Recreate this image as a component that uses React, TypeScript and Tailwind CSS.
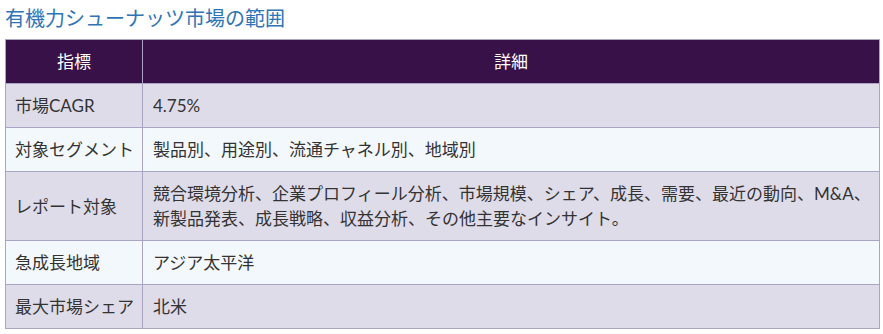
import React from "react";

const rows: { k: string; v: React.ReactNode; bg: string }[] = [
  { k: "市場CAGR", v: "4.75%", bg: "bg-[#dfdcea]" },
  { k: "対象セグメント", v: "製品別、用途別、流通チャネル別、地域別", bg: "bg-[#f3f8fc]" },
  {
    k: "レポート対象",
    v: (
      <>
        競合環境分析、企業プロフィール分析、市場規模、シェア、成長、需要、最近の動向、M&amp;A、
        <br />
        新製品発表、成長戦略、収益分析、その他主要なインサイト。
      </>
    ),
    bg: "bg-[#dfdcea]",
  },
  { k: "急成長地域", v: "アジア太平洋", bg: "bg-[#f3f8fc]" },
  { k: "最大市場シェア", v: "北米", bg: "bg-[#dfdcea]" },
];

export default function App() {
  return (
    <div
      className="w-[883px] h-[334px] bg-white overflow-hidden"
      style={{ fontFamily: 'Lato, "Noto Sans CJK JP", sans-serif' }}
    >
      <h2 className="pl-[5px] pt-[4px] h-[39px] text-[20px] leading-[28px] text-[#2f74b5] font-normal">
        有機力シューナッツ市場の範囲
      </h2>
      <table className="ml-[5px] w-[875px] table-fixed border-collapse text-[17px] leading-[25px] text-[#333333]">
        <colgroup>
          <col className="w-[137px]" />
          <col />
        </colgroup>
        <thead>
          <tr className="bg-[#371148] text-white h-[44px]">
            <th className="border border-[#aaa4c4] font-normal text-center px-[10px]">指標</th>
            <th className="border border-[#aaa4c4] font-normal text-center px-[10px]">詳細</th>
          </tr>
        </thead>
        <tbody>
          {rows.map((r) => (
            <tr key={r.k} className={r.bg}>
              <td className="border border-[#aaa4c4] px-[9px] py-[9px] align-middle whitespace-nowrap">{r.k}</td>
              <td className="border border-[#aaa4c4] px-[10px] py-[9px] align-middle whitespace-nowrap">{r.v}</td>
            </tr>
          ))}
        </tbody>
      </table>
    </div>
  );
}
